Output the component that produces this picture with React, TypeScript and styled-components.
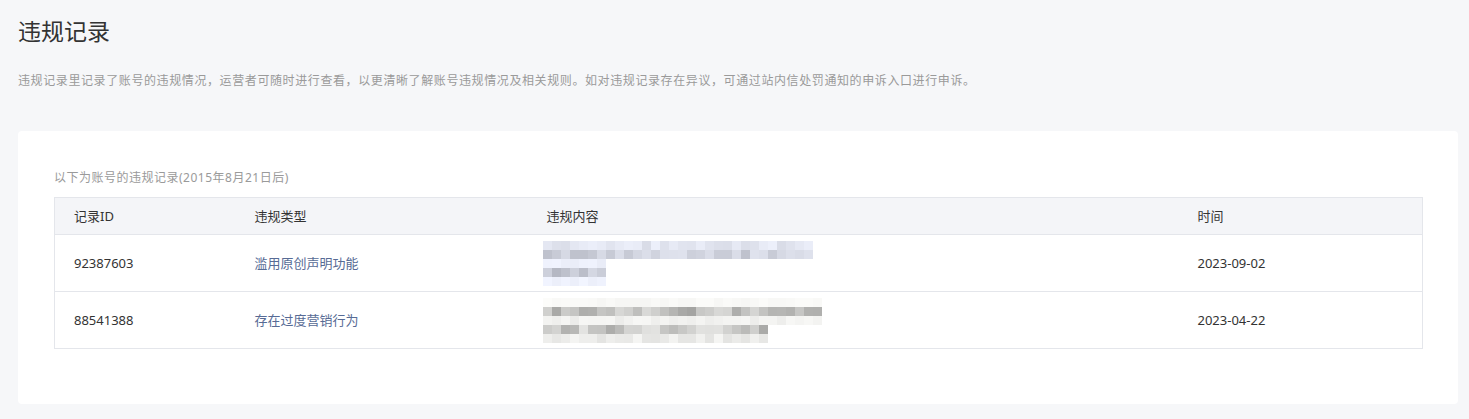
import React from 'react';
import styled, { createGlobalStyle } from 'styled-components';

const GlobalStyle = createGlobalStyle`
  html, body {
    margin: 0;
    padding: 0;
    background: #f6f7f9;
  }
  body {
    font-family: "Noto Sans", "Noto Sans CJK SC", sans-serif;
    color: #333;
  }
`;

type Strip = { count: number; base: number; spread: number };

type Record = {
  id: string;
  type: string;
  date: string;
  strips: Strip[];
  tone: 'blue' | 'grey';
  seed: number;
};

const records: Record[] = [
  {
    id: '92387603',
    type: '滥用原创声明功能',
    date: '2023-09-02',
    tone: 'blue',
    seed: 7,
    strips: [
      { count: 30, base: 240, spread: 22 },
      { count: 30, base: 222, spread: 34 },
      { count: 7, base: 247, spread: 10 },
      { count: 7, base: 214, spread: 44 },
      { count: 7, base: 248, spread: 8 },
    ],
  },
  {
    id: '88541388',
    type: '存在过度营销行为',
    date: '2023-04-22',
    tone: 'grey',
    seed: 13,
    strips: [
      { count: 31, base: 250, spread: 6 },
      { count: 31, base: 205, spread: 60 },
      { count: 31, base: 244, spread: 12 },
      { count: 25, base: 210, spread: 60 },
      { count: 25, base: 240, spread: 18 },
    ],
  },
];

// 打码块的颜色，按种子算出来，每次一样
const cellColor = (seed: number, i: number, tone: 'blue' | 'grey', s: Strip) => {
  const r = Math.abs(Math.sin(seed * 97.3 + i * 12.9898) * 43758.5453) % 1;
  const v = Math.round(s.base - (r - 0.3) * s.spread);
  const c = Math.min(253, v);
  if (tone === 'blue') return `rgb(${c - 8}, ${c - 5}, ${Math.min(255, c + 6)})`;
  return `rgb(${c}, ${c}, ${c - 2})`;
};

const Mosaic = ({ strips, tone, seed }: { strips: Strip[]; tone: 'blue' | 'grey'; seed: number }) => (
  <MosaicBox>
    {strips.map((s, si) => (
      <CellRow key={si}>
        {Array.from({ length: s.count }).map((_, i) => (
          <Cell key={i} style={{ background: cellColor(seed + si * 31, i, tone, s) }} />
        ))}
      </CellRow>
    ))}
  </MosaicBox>
);

export default function App() {
  return (
    <Page>
      <GlobalStyle />
      <Title>违规记录</Title>
      <Intro>
        违规记录里记录了账号的违规情况，运营者可随时进行查看，以更清晰了解账号违规情况及相关规则。如对违规记录存在异议，可通过站内信处罚通知的申诉入口进行申诉。
      </Intro>
      <Card>
        <Caption>以下为账号的违规记录(2015年8月21日后)</Caption>
        <Table>
          <colgroup>
            <col style={{ width: 181 }} />
            <col style={{ width: 292 }} />
            <col style={{ width: 651 }} />
            <col style={{ width: 244 }} />
          </colgroup>
          <thead>
            <tr>
              <Th>记录ID</Th>
              <Th>违规类型</Th>
              <Th>违规内容</Th>
              <Th>时间</Th>
            </tr>
          </thead>
          <tbody>
            {records.map((r) => (
              <tr key={r.id}>
                <Td>{r.id}</Td>
                <Td $link>{r.type}</Td>
                <Td>
                  <Mosaic strips={r.strips} tone={r.tone} seed={r.seed} />
                </Td>
                <Td>{r.date}</Td>
              </tr>
            ))}
          </tbody>
        </Table>
      </Card>
    </Page>
  );
}

const Page = styled.div`
  padding: 13px 11px 15px 18px;
`;

const Title = styled.h2`
  margin: 0;
  font-size: 23px;
  font-weight: 400;
  line-height: 34px;
  color: #333;
  font-family: "Noto Sans CJK SC", sans-serif;
`;

const Intro = styled.p`
  margin: 24px 0 0;
  font-size: 12px;
  line-height: 18px;
  letter-spacing: 0.6px;
  color: #9a9a9a;
  font-family: "Noto Sans CJK SC", sans-serif;
`;

const Card = styled.div`
  margin-top: 42px;
  background: #fff;
  border-radius: 4px;
  padding: 38px 36px 55px;
`;

const Caption = styled.div`
  font-size: 12px;
  line-height: 18px;
  color: #9a9a9a;
  letter-spacing: 0.5px;
  margin-bottom: 10px;
`;

const Table = styled.table`
  width: 1368px;
  table-layout: fixed;
  border-collapse: collapse;
  border: 1px solid #e4e6eb;
  font-size: 13px;
`;

const Th = styled.th`
  background: #f4f5f8;
  text-align: left;
  font-weight: 400;
  color: #333;
  height: 36px;
  padding: 0 19px;
  border-bottom: 1px solid #e4e6eb;
  line-height: 18px;
`;

const Td = styled.td<{ $link?: boolean }>`
  padding: 4px 19px;
  height: 48px;
  color: ${(p) => (p.$link ? '#576b95' : '#333')};
  border-bottom: 1px solid #e4e6eb;
  vertical-align: middle;
  line-height: 18px;
`;

const MosaicBox = styled.div`
  display: flex;
  flex-direction: column;
  margin-left: -4px;
`;

const CellRow = styled.div`
  display: flex;
`;

const Cell = styled.span`
  width: 9px;
  height: 9px;
  flex: none;
`;
